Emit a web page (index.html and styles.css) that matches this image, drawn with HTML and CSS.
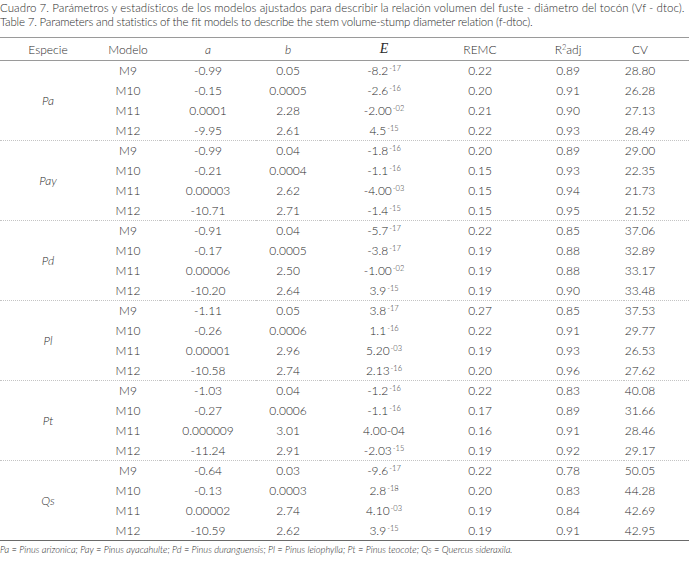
FILE: index.html
```html
<!DOCTYPE html>
<html lang="es">
<head>
<meta charset="utf-8">
<title>Cuadro 7</title>
<link rel="stylesheet" href="styles.css">
</head>
<body>
<div class="caption">
  <p class="es">Cuadro 7. Parámetros y estadísticos de los modelos ajustados para describir la relación volumen del fuste - diámetro del tocón (Vf - dtoc).</p>
  <p class="en">Table 7. Parameters and statistics of the fit models to describe the stem volume-stump diameter relation (f-dtoc).</p>
</div>
<table class="data">
  <colgroup>
    <col class="c-sp"><col class="c-mo"><col class="c-a"><col class="c-b"><col class="c-e"><col class="c-remc"><col class="c-r2"><col class="c-cv">
  </colgroup>
  <thead>
    <tr>
      <th>Especie</th><th>Modelo</th><th class="it">a</th><th class="it">b</th><th class="serif-e">E</th><th>REMC</th><th>R<sup class="r2">2</sup>adj</th><th class="cv">CV</th>
    </tr>
  </thead>
  <tbody>
    <tr class="first"><td rowspan="4" class="sp">Pa</td><td>M9</td><td>-0.99</td><td>0.05</td><td>-8.2<sup>-17</sup></td><td>0.22</td><td>0.89</td><td class="cv">28.80</td></tr>
    <tr><td>M10</td><td>-0.15</td><td>0.0005</td><td>-2.6<sup>-16</sup></td><td>0.20</td><td>0.91</td><td class="cv">26.28</td></tr>
    <tr><td>M11</td><td>0.0001</td><td>2.28</td><td>-2.00<sup>-02</sup></td><td>0.21</td><td>0.90</td><td class="cv">27.13</td></tr>
    <tr><td>M12</td><td>-9.95</td><td>2.61</td><td>4.5<sup>-15</sup></td><td>0.22</td><td>0.93</td><td class="cv">28.49</td></tr>
  </tbody>
  <tbody>
    <tr class="first"><td rowspan="4" class="sp">Pay</td><td>M9</td><td>-0.99</td><td>0.04</td><td>-1.8<sup>-16</sup></td><td>0.20</td><td>0.89</td><td class="cv">29.00</td></tr>
    <tr><td>M10</td><td>-0.21</td><td>0.0004</td><td>-1.1<sup>-16</sup></td><td>0.15</td><td>0.93</td><td class="cv">22.35</td></tr>
    <tr><td>M11</td><td>0.00003</td><td>2.62</td><td>-4.00<sup>-03</sup></td><td>0.15</td><td>0.94</td><td class="cv">21.73</td></tr>
    <tr><td>M12</td><td>-10.71</td><td>2.71</td><td>-1.4<sup>-15</sup></td><td>0.15</td><td>0.95</td><td class="cv">21.52</td></tr>
  </tbody>
  <tbody>
    <tr class="first"><td rowspan="4" class="sp">Pd</td><td>M9</td><td>-0.91</td><td>0.04</td><td>-5.7<sup>-17</sup></td><td>0.22</td><td>0.85</td><td class="cv">37.06</td></tr>
    <tr><td>M10</td><td>-0.17</td><td>0.0005</td><td>-3.8<sup>-17</sup></td><td>0.19</td><td>0.88</td><td class="cv">32.89</td></tr>
    <tr><td>M11</td><td>0.00006</td><td>2.50</td><td>-1.00<sup>-02</sup></td><td>0.19</td><td>0.88</td><td class="cv">33.17</td></tr>
    <tr><td>M12</td><td>-10.20</td><td>2.64</td><td>3.9<sup>-15</sup></td><td>0.19</td><td>0.90</td><td class="cv">33.48</td></tr>
  </tbody>
  <tbody>
    <tr class="first"><td rowspan="4" class="sp">Pl</td><td>M9</td><td>-1.11</td><td>0.05</td><td>3.8<sup>-17</sup></td><td>0.27</td><td>0.85</td><td class="cv">37.53</td></tr>
    <tr><td>M10</td><td>-0.26</td><td>0.0006</td><td>1.1<sup>-16</sup></td><td>0.22</td><td>0.91</td><td class="cv">29.77</td></tr>
    <tr><td>M11</td><td>0.00001</td><td>2.96</td><td>5.20<sup>-03</sup></td><td>0.19</td><td>0.93</td><td class="cv">26.53</td></tr>
    <tr><td>M12</td><td>-10.58</td><td>2.74</td><td>2.13<sup>-16</sup></td><td>0.20</td><td>0.96</td><td class="cv">27.62</td></tr>
  </tbody>
  <tbody>
    <tr class="first"><td rowspan="4" class="sp">Pt</td><td>M9</td><td>-1.03</td><td>0.04</td><td>-1.2<sup>-16</sup></td><td>0.22</td><td>0.83</td><td class="cv">40.08</td></tr>
    <tr><td>M10</td><td>-0.27</td><td>0.0006</td><td>-1.1<sup>-16</sup></td><td>0.17</td><td>0.89</td><td class="cv">31.66</td></tr>
    <tr><td>M11</td><td>0.000009</td><td>3.01</td><td>4.00-04</td><td>0.16</td><td>0.91</td><td class="cv">28.46</td></tr>
    <tr><td>M12</td><td>-11.24</td><td>2.91</td><td>-2.03<sup>-15</sup></td><td>0.19</td><td>0.92</td><td class="cv">29.17</td></tr>
  </tbody>
  <tbody>
    <tr class="first"><td rowspan="4" class="sp">Qs</td><td>M9</td><td>-0.64</td><td>0.03</td><td>-9.6<sup>-17</sup></td><td>0.22</td><td>0.78</td><td class="cv">50.05</td></tr>
    <tr><td>M10</td><td>-0.13</td><td>0.0003</td><td>2.8<sup>-18</sup></td><td>0.20</td><td>0.83</td><td class="cv">44.28</td></tr>
    <tr><td>M11</td><td>0.00002</td><td>2.74</td><td>4.10<sup>-03</sup></td><td>0.19</td><td>0.84</td><td class="cv">42.69</td></tr>
    <tr><td>M12</td><td>-10.59</td><td>2.62</td><td>3.9<sup>-15</sup></td><td>0.19</td><td>0.91</td><td class="cv">42.95</td></tr>
  </tbody>
</table>
<p class="note">Pa = Pinus arizonica; Pay = Pinus ayacahulte; Pd = Pinus duranguensis; Pl = Pinus leiophylla; Pt = Pinus teocote; Qs = Quercus sideraxila.</p>
</body>
</html>
```

FILE: styles.css
```css
html, body {
  margin: 0;
  padding: 0;
  background: #ffffff;
}
body {
  font-family: "Lato", "Liberation Sans", sans-serif;
  font-weight: 300;
  color: #2b2b2b;
  width: 689px;
}
.caption {
  padding-top: 1px;
}
.caption p {
  margin: 0;
  font-size: 11.5px;
  line-height: 14px;
  white-space: nowrap;
}
.caption .es {
  letter-spacing: 0.06px;
}
.caption .en {
  letter-spacing: -0.2px;
}
.data {
  margin-top: 8px;
  width: 689px;
  border-collapse: collapse;
  table-layout: fixed;
  font-size: 12px;
  border-top: 1px solid #9a9a9a;
  border-bottom: 1px solid #6a6a6a;
}
.c-sp { width: 96px; }
.c-mo { width: 64px; }
.c-a { width: 96px; }
.c-b { width: 64px; }
.c-e { width: 128px; }
.c-remc { width: 64px; }
.c-r2 { width: 112px; }
.c-cv { width: 65px; }
.data th {
  font-weight: 300;
  height: 22px;
  padding: 0;
  text-align: center;
  border-bottom: 1px solid #9a9a9a;
}
.data td {
  height: 20px;
  padding: 0;
  text-align: center;
  white-space: nowrap;
}
.data tr.first td {
  height: 19px;
}
.data .cv {
  padding-right: 33px;
}
.data th.it {
  font-style: italic;
}
.data th.serif-e {
  font-family: "Liberation Serif", serif;
  font-style: italic;
  font-size: 14px;
  font-weight: 400;
}
.data td.sp {
  font-style: italic;
  vertical-align: middle;
}
.data tbody + tbody tr.first td {
  border-top: 1px dotted #c4c4c4;
}
.data sup {
  font-size: 7.5px;
  vertical-align: 4px;
  line-height: 0;
  margin-left: 1px;
}
.data sup.r2 {
  margin-left: 0;
}
.note {
  margin: 3px 0 0 0;
  font-size: 9.3px;
  font-style: italic;
  line-height: 12px;
}
```
